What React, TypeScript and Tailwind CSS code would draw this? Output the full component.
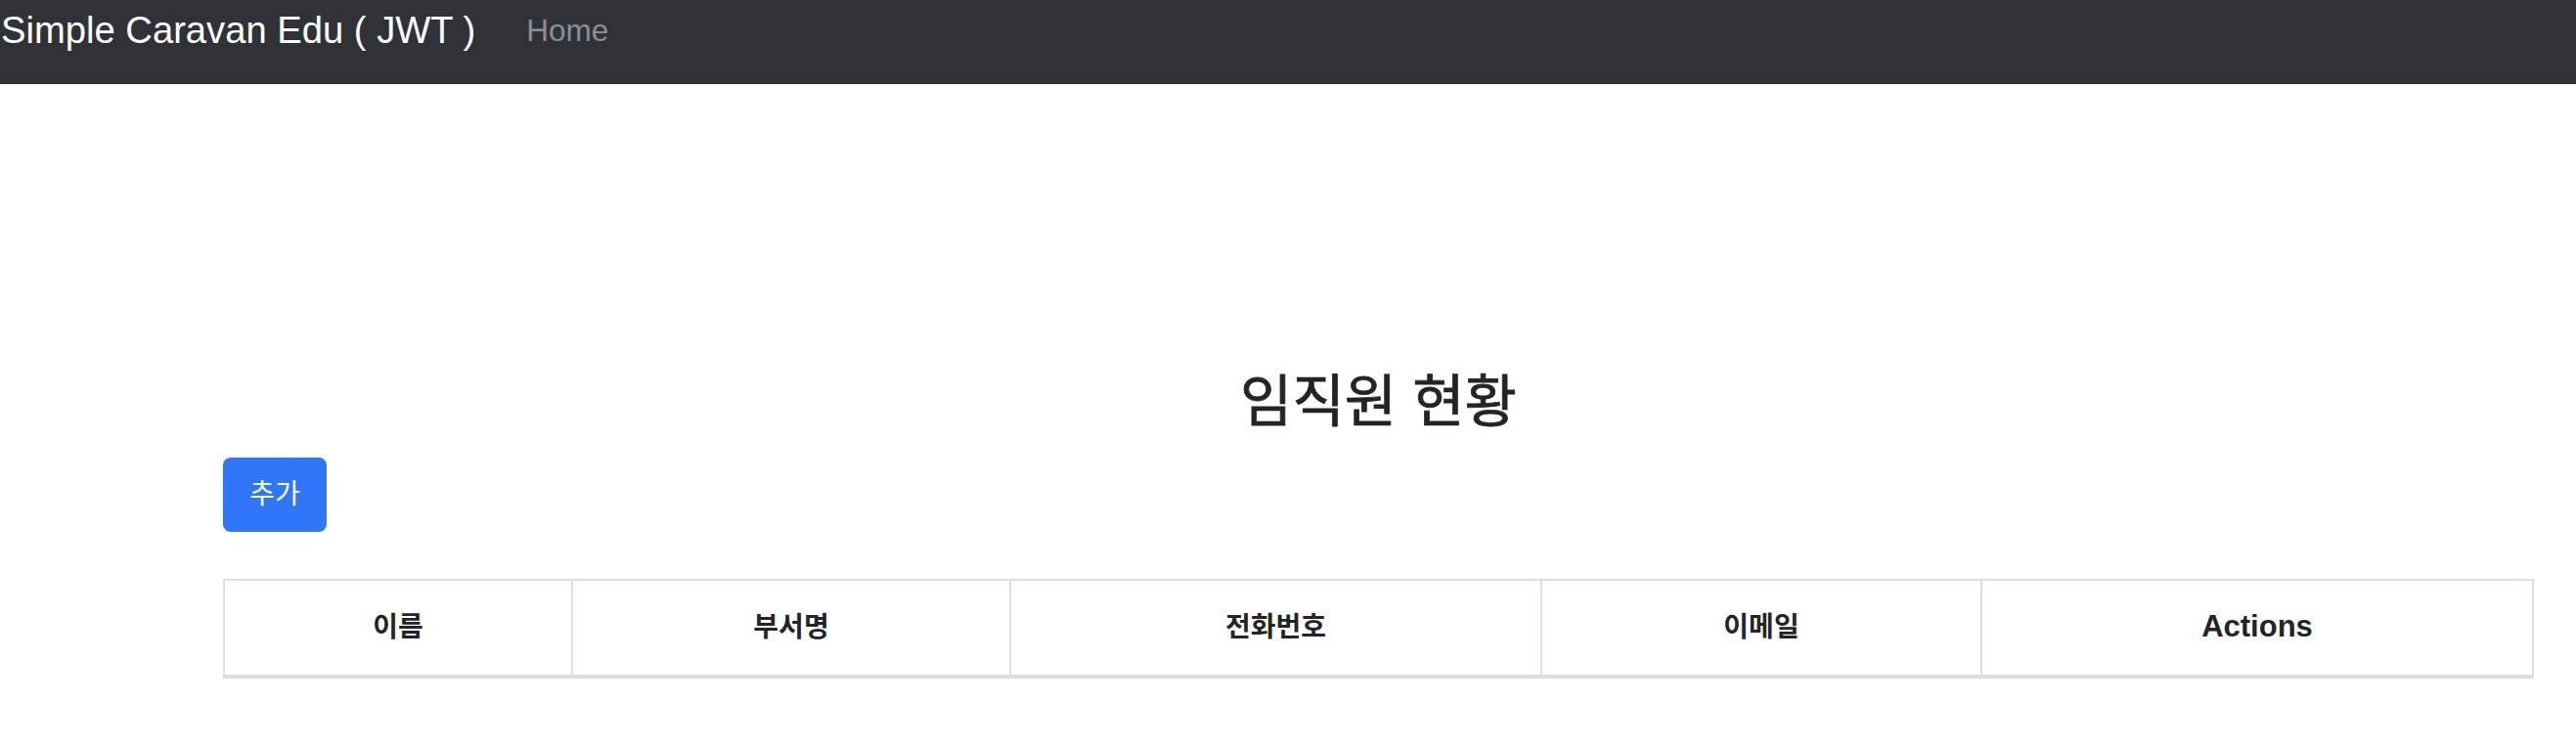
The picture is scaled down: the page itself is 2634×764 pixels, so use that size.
const columns = [
  { label: '이름', width: 'w-[354px]', first: true },
  { label: '부서명', width: 'w-[448px]' },
  { label: '전화번호', width: 'w-[543px]' },
  { label: '이메일', width: 'w-[450px]' },
  { label: 'Actions', width: 'w-[564px]', latin: true },
];

const Navbar = () => (
  <nav className="flex h-[86px] items-start bg-[#2f3337]">
    <a className="mt-[12px] ml-[1px] text-[38.2px] leading-none text-white">
      Simple Caravan Edu ( JWT )
    </a>
    <a className="mt-[16px] ml-[52px] text-[31.5px] leading-none text-[#8c8f92]">
      Home
    </a>
  </nav>
);

const EmployeeTable = () => (
  <div className="mt-[48px] flex border-2 border-b-4 border-[#dadde1]">
    {columns.map((col) => (
      <div
        key={col.label}
        className={`flex h-[96px] items-center justify-center font-bold text-[#212529] ${col.width} ${
          col.latin ? 'text-[31px]' : 'text-[28px]'
        } ${col.first ? '' : 'border-l-2 border-[#dadde1]'}`}
      >
        {col.label}
      </div>
    ))}
  </div>
);

export default function App() {
  return (
    <div
      className="min-h-screen bg-white"
      style={{ fontFamily: '"Liberation Sans", "Noto Sans CJK KR", sans-serif' }}
    >
      <Navbar />
      <main className="ml-[228px] w-[2363px]">
        <h1 className="mt-[290px] text-center text-[58px] leading-[1.2] font-normal text-[#212529] [-webkit-text-stroke:0.8px_#212529]">
          임직원 현황
        </h1>
        <button className="mt-[22px] flex h-[76px] w-[106px] items-center justify-center rounded-[8px] bg-[#2f76f9] text-[28px] text-white">
          추가
        </button>
        <EmployeeTable />
      </main>
    </div>
  );
}
